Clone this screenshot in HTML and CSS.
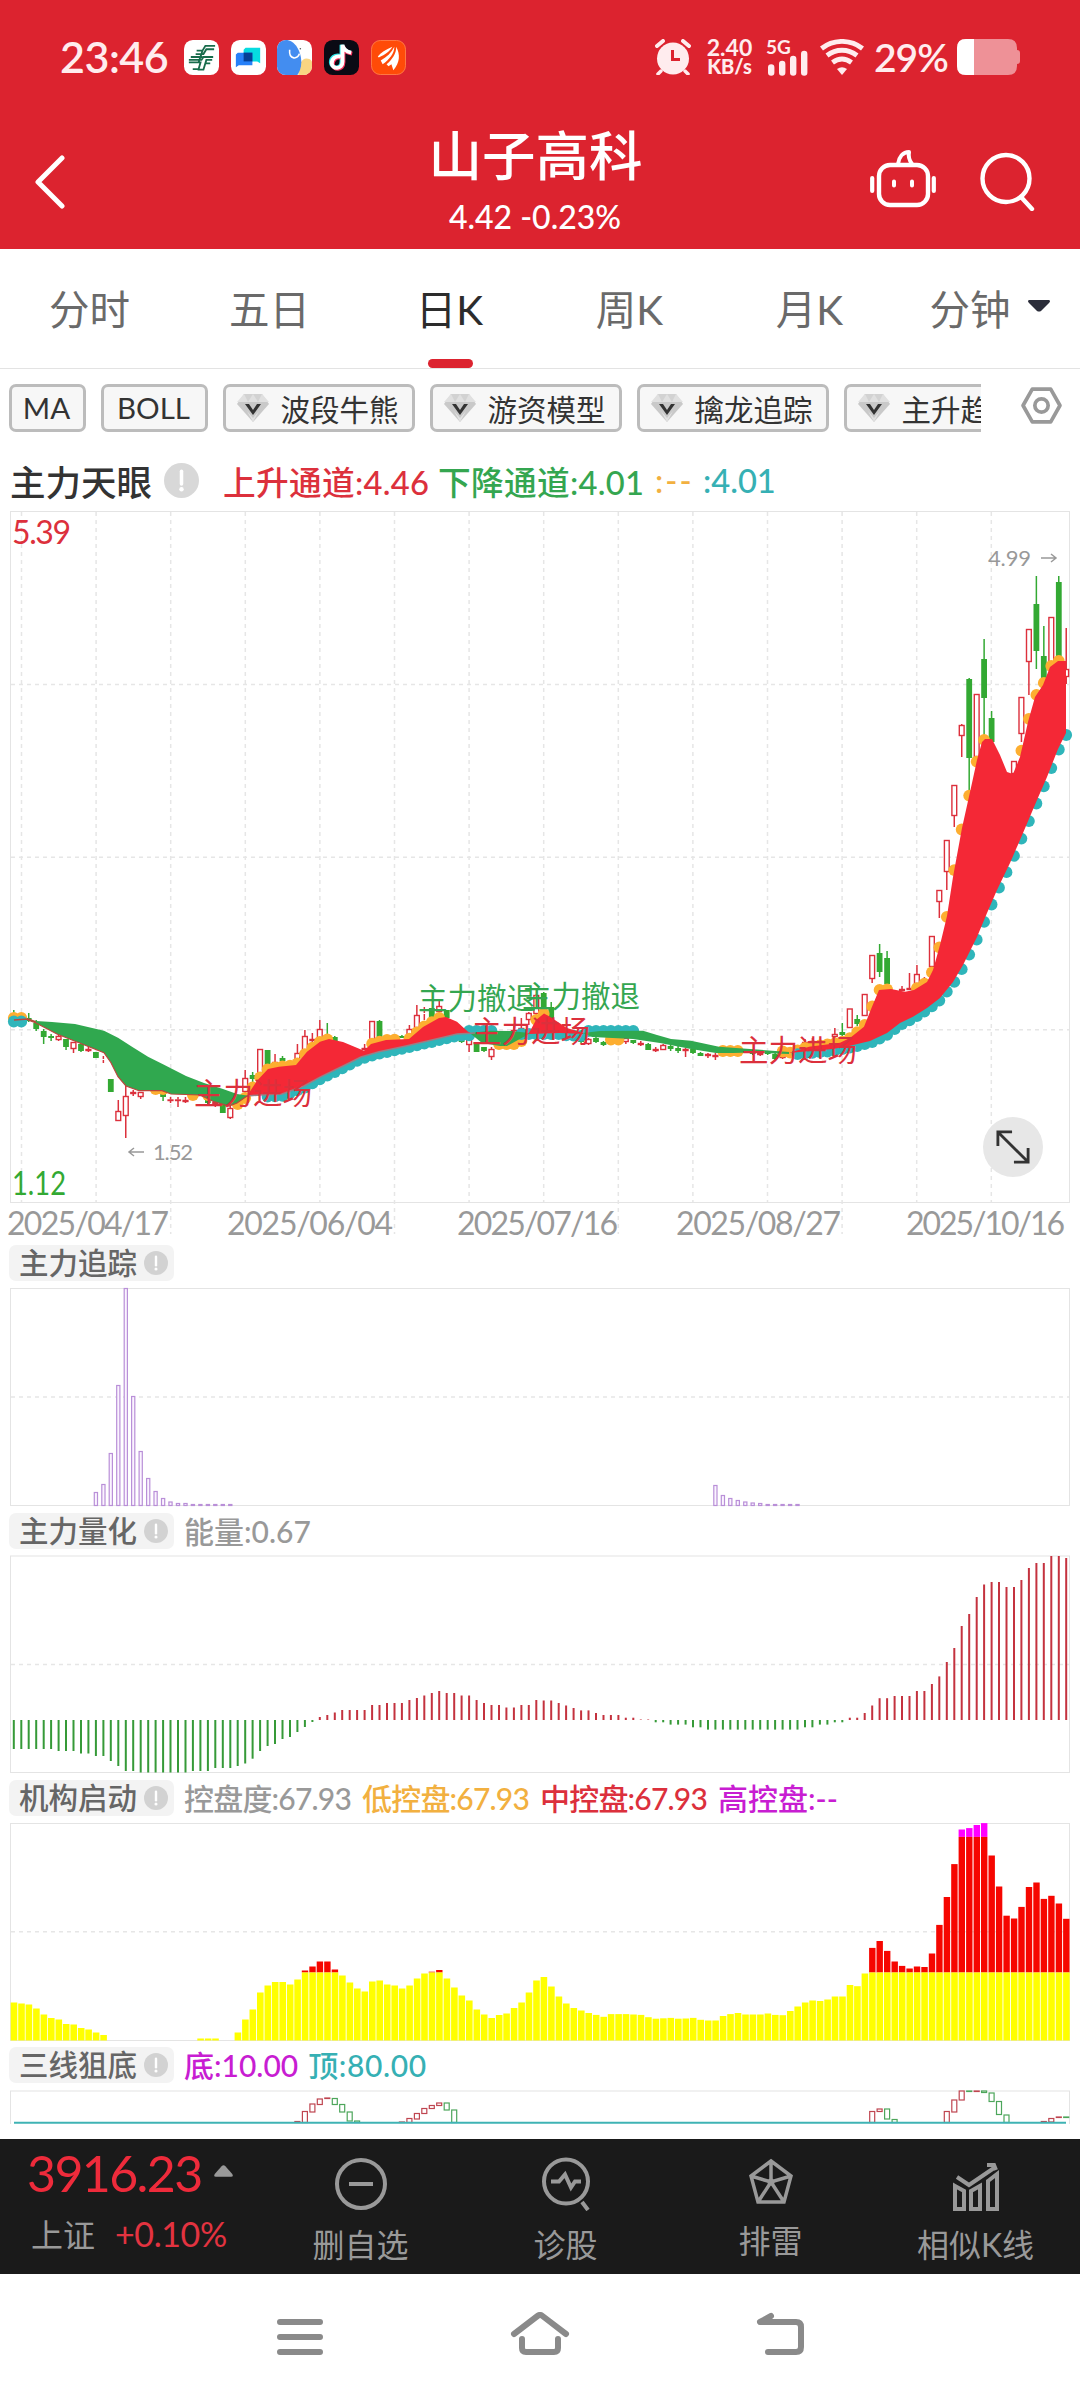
FILE: index.html
```
<!DOCTYPE html>
<html lang="zh-CN">
<head>
    <meta charset="UTF-8">
    <meta name="viewport" content="width=device-width, initial-scale=1.0">
    <title>山子高科 日K</title>
    <link rel="stylesheet" href="styles.css">
</head>
<body>
    <svg class="defs" width="0" height="0">
        <symbol id="gem" viewBox="0 0 32 30">
            <path d="M7 1h18l7 10-16 18L0 11z" fill="#c9c9c9"/>
            <path d="M7 1h18l7 8H0z" fill="#e0e0e0"/>
            <path d="M7 1l4 8 5-8 5 8 4-8" fill="#d2d2d2"/>
            <path d="M10 18l6 7 6-7-6 11z" fill="#e2e2e2"/>
            <path d="M8 11h4l4 6 4-6h4l-8 11z" fill="#333"/>
        </symbol>
        <symbol id="info" viewBox="0 0 36 36">
            <circle cx="18" cy="18" r="18" fill="currentColor"/>
            <path d="M18 8.500v13" stroke="#fff" stroke-width="3.600" stroke-linecap="round"/>
            <circle cx="18" cy="27" r="2.300" fill="#fff"/>
        </symbol>
    </svg>

    <div class="header">
        <div class="status">
            <span class="clock">23:46</span>
            <div class="apps">
                <svg viewBox="0 0 36 36">
                    <rect width="36" height="36" rx="9" fill="#fff"/>
                    <g fill="none" stroke="#176b4b" stroke-width="1.900">
                        <path d="M32 6H22l-3 5h-6M31 9.500h-8l-3 5h-8M30 17.500H20l-2 3H5M7 17.500h12M5 23h12l-2 7H9M29 20.500h-6l-3 10h-6M27 24h-5M19 11l-4 12"/>
                    </g>
                </svg>
                <svg viewBox="0 0 36 36">
                    <rect width="36" height="36" rx="9" fill="#fff"/>
                    <path d="M15 8h15v16l-3-2H13V10z" fill="#06dbe0"/>
                    <path d="M7 13h15v13H8l-3 2V15z" fill="#2680f8"/>
                    <path d="M13 13h9v9h-9z" fill="#053f94"/>
                </svg>
                <svg viewBox="0 0 36 36">
                    <rect width="36" height="36" rx="9" fill="#fff"/>
                    <path d="M22 36c0-12 4-17 8-17 3 0 5 1 6 3v5a9 9 0 0 1-9 9z" fill="#f9d582"/>
                    <path d="M9 0c9 0 16 11 16 23 0 6-2 10-4 13H9a9 9 0 0 1-9-9V9a9 9 0 0 1 9-9z" fill="#438df0"/>
                    <path d="M13 10c-1 11 9 10 10 4" fill="none" stroke="#fff" stroke-width="1.600"/>
                    <circle cx="24" cy="9" r=".8" fill="#555"/>
                </svg>
                <svg viewBox="0 0 36 36">
                    <rect width="36" height="36" rx="9" fill="#0b0a14"/>
                    <g fill="none" stroke-width="4">
                        <path d="M16 16c-5-1-9 2-9 7 0 6 11 8 11-1V5c1 5 4 7 9 8" stroke="#2be4e6"/>
                        <path d="M18 18c-5-1-9 2-9 7 0 6 11 7 11-2V7c1 5 4 6 9 7" stroke="#f8325d"/>
                        <path d="M17 17c-5-1-9 2-9 7 0 6 11 7 11-2V5c1 5 4 7 9 8" stroke="#fff"/>
                    </g>
                </svg>
                <svg viewBox="0 0 36 36">
                    <rect x=".5" y=".5" width="35" height="35" rx="9" fill="#ff4b08" stroke="#ff7a45"/>
                    <path d="M7 17c3-4 8-7 15-10-3 5-7 8-14 11zM10 21C16 18 21 13 24 7c0 7-5 13-12 18zM16 25c6-5 10-11 10-18 4 8 4 16-3 24l-2-6-3 2z" fill="#fff"/>
                </svg>
            </div>
            <div class="signals">
                <svg class="alarm" viewBox="0 0 36 36">
                    <circle cx="18" cy="19.500" r="16" fill="currentColor"/>
                    <path d="M2 7l6-5M34 7l-6-5" stroke="currentColor" stroke-width="4" stroke-linecap="round"/>
                    <path d="M6 32l-3 3M30 32l3 3" stroke="currentColor" stroke-width="3.500" stroke-linecap="round"/>
                    <path d="M17.500 11v9.500H25" fill="none" stroke="#dc232f" stroke-width="3"/>
                </svg>
                <div class="speed"><span>2.40</span><span class="unit">KB/s</span></div>
                <div class="cell">
                    <span>5G</span>
                    <svg viewBox="0 0 40 26"><path d="M3.200 17.500v5M14.200 14v8.500M25.200 9v13.500M36.200 4v18.500" stroke="currentColor" stroke-width="6.400" stroke-linecap="round"/></svg>
                </div>
                <svg class="wifi" viewBox="0 0 44 36">
                    <g fill="none" stroke="currentColor" stroke-width="4.800">
                        <path d="M1.500 9.500c12-9.500 29-9.500 41 0M7 16.500c9-7 21-7 30 0M12.500 23.500c6-4.500 13-4.500 19 0"/>
                    </g>
                    <path d="M17 30q5-3.500 10 0l-5 6z" fill="currentColor"/>
                </svg>
                <span class="percent">29%</span>
                <svg class="battery" viewBox="0 0 64 36">
                    <path d="M9 0h42q9 0 9 9v2q3 0 3 3v8q0 3-3 3v2q0 9-9 9H9q-9 0-9-9V9q0-9 9-9z" fill="#ee9197"/>
                    <path d="M17 0H9Q0 0 0 9v18q0 9 9 9h8z" fill="#fff"/>
                </svg>
            </div>
        </div>
        <div class="title-bar">
            <svg class="back" viewBox="0 0 32 54"><path d="M28 3L4 27l24 24" fill="none" stroke="#fff" stroke-width="5" stroke-linecap="round" stroke-linejoin="round"/></svg>
            <div class="stock">
                <div class="stock-name">山子高科</div>
                <div class="stock-price">4.42 -0.23%</div>
            </div>
            <div class="actions">
                <svg class="robot" viewBox="0 0 66 60" fill="none" stroke="#fff" stroke-width="4.400" stroke-linecap="round">
                    <rect x="9" y="16" width="49" height="40" rx="11"/>
                    <path d="M2.200 29v13M63.800 29v13" stroke-width="4.200"/>
                    <path d="M24 32.500v4M42 32.500v4" stroke-width="4"/>
                    <path d="M28 15c1-7 5-12 11-12-1 5 0 8 3 12" stroke-width="4" stroke-linejoin="round"/>
                </svg>
                <svg class="search" viewBox="0 0 56 60" fill="none" stroke="#fff" stroke-width="4.400" stroke-linecap="round">
                    <circle cx="27" cy="27.500" r="23.500"/>
                    <path d="M42 46l11 12"/>
                </svg>
            </div>
        </div>
    </div>

    <div class="tabs">
        <div class="tab">分时</div>
        <div class="tab">五日</div>
        <div class="tab active">日K</div>
        <div class="tab">周K</div>
        <div class="tab">月K</div>
        <div class="tab">分钟<svg class="caret" viewBox="0 0 22 12"><path d="M1 0h20q2 1 0 3l-8 8q-2 1-4 0L1 3q-2-2 0-3z" fill="#2b2d3a"/></svg></div>
    </div>

    <div class="chips">
        <div class="chip-list">
            <div class="chip">MA</div>
            <div class="chip">BOLL</div>
            <div class="chip"><svg><use href="#gem"/></svg>波段牛熊</div>
            <div class="chip"><svg><use href="#gem"/></svg>游资模型</div>
            <div class="chip"><svg><use href="#gem"/></svg>擒龙追踪</div>
            <div class="chip"><svg><use href="#gem"/></svg>主升趋势</div>
        </div>
        <svg class="setting" viewBox="0 0 40 36" fill="none" stroke="#999" stroke-width="3.600">
            <path d="M11 2h18l9 16-9 16H11L2 18z" stroke-linejoin="round"/>
            <circle cx="20" cy="18" r="6.500"/>
        </svg>
    </div>

    <div class="legend">
        <span class="legend-name">主力天眼</span>
        <svg class="info"><use href="#info"/></svg>
        <span class="red up">上升通道:4.46</span>
        <span class="green down">下降通道:4.01</span>
        <span class="orange dash">:--</span>
        <span class="teal">:4.01</span>
    </div>

    <!-- every chart uses the same canvas units, the viewBox picks its slice -->
    <div class="main-chart">
        <svg id="kline" width="1080" height="735" viewBox="0 505 1080 735"></svg>
        <div class="expand">
            <svg viewBox="0 0 36 36" fill="none" stroke="#333" stroke-width="3"><path d="M2 17V2h15M2 2l32 32M34 19v15H19"/></svg>
        </div>
    </div>

    <div class="sub-head"><span class="tag">主力追踪<svg><use href="#info"/></svg></span></div>
    <svg id="track" width="1080" height="224" viewBox="0 1284 1080 224"></svg>

    <div class="sub-head"><span class="tag">主力量化<svg><use href="#info"/></svg></span><span class="value gray">能量:0.67</span></div>
    <svg id="energy" width="1080" height="223" viewBox="0 1552 1080 223"></svg>

    <div class="sub-head">
        <span class="tag">机构启动<svg><use href="#info"/></svg></span>
        <span class="value tight gray">控盘度:67.93</span>
        <span class="value tight orange">低控盘:67.93</span>
        <span class="value tight red">中控盘:67.93</span>
        <span class="value purple">高控盘:--</span>
    </div>
    <svg id="control" width="1080" height="223" viewBox="0 1819 1080 223"></svg>

    <div class="sub-head">
        <span class="tag">三线狙底<svg><use href="#info"/></svg></span>
        <span class="value purple">底:10.00</span>
        <span class="value wide teal">顶:80.00</span>
    </div>
    <svg id="snipe" width="1080" height="38" viewBox="0 2086 1080 38"></svg>

    <div class="toolbar">
        <div class="index">
            <div class="index-value">3916.23<svg viewBox="0 0 20 12"><path d="M10 0q1 0 2 1l7 8q2 3-1 3H2q-3 0-1-3l7-8q1-1 2-1z" fill="#999"/></svg></div>
            <div class="index-row"><span>上证</span><span class="change">+0.10%</span></div>
        </div>
        <div class="tool">
            <svg viewBox="0 0 54 54"><circle cx="27" cy="27" r="24"/><path d="M15 27h24"/></svg>
            <span>删自选</span>
        </div>
        <div class="tool">
            <svg viewBox="0 0 54 54"><circle cx="27" cy="24.500" r="22"/><path d="M12 24.500h8l6-7 6 13 4-6h6M43 45l6 8"/></svg>
            <span>诊股</span>
        </div>
        <div class="tool radar">
            <svg viewBox="0 0 54 54"><path d="M27 4l20 15-7 26H14L7 19zM27 4v21M7 19l20 6 20-6M14 45l13-20 13 20"/><circle cx="27" cy="25" r="3.500" fill="#999" stroke="none"/></svg>
            <span>排雷</span>
        </div>
        <div class="tool">
            <svg viewBox="0 0 54 54"><path d="M6 29l9 5v18H6zM22 34l9-5v23h-9zM39 24l9-7v35h-9z"/><path d="M8 20l12 8L45 11M38 8h7l2 5"/></svg>
            <span>相似K线</span>
        </div>
    </div>

    <div class="nav">
        <svg viewBox="0 0 60 50"><path d="M10 10h40M10 25h40M10 40h40"/></svg>
        <svg viewBox="0 0 60 50"><path d="M4 22L27.500 4q2.500-2 5 0L56 22M12 27v9q0 4 4 4h28q4 0 4-4v-9"/></svg>
        <svg viewBox="0 0 60 50"><path d="M21 4L10 10h36q5 0 5 5v20q0 5-5 5H18"/></svg>
    </div>

    <script src="chart.js"></script>
</body>
</html>
```
FILE: styles.css
```
* {
    box-sizing: border-box;
}

body {
    margin: 0;
    width: 1080px;
    background-color: #fff;
    color: #333;
    font-family: Lato, "Noto Sans CJK SC", sans-serif;
}

svg {
    display: block;
    flex: none;
}

.defs {
    position: absolute;
}

/* header */
.header {
    height: 249px;
    background-color: #dc232f;
    color: #fff;
    overflow: hidden;
}

.status {
    display: flex;
    align-items: center;
    height: 36px;
    margin-top: 39px;
    padding: 0 59px 0 60px;
    color: #ffecee;
}

.clock {
    width: 124px;
    padding-bottom: 2px;
    font-size: 43px;
    font-weight: 600;
    letter-spacing: -0.5px;
    white-space: nowrap;
}

.apps {
    display: flex;
    gap: 11.7px;
}

.apps svg {
    width: 35px;
    height: 35px;
}

.signals {
    display: flex;
    align-items: center;
    height: 36px;
    margin-left: auto;
    font-weight: bold;
}

.alarm {
    width: 36px;
    height: 36px;
    margin: 0 15px 0 -2px;
}

.speed {
    width: 48px;
    font-size: 23px;
    line-height: 19px;
    text-align: center;
    margin-right: 14px;
}

.speed span {
    display: block;
    margin-left: -1px;
}

.speed .unit {
    font-size: 20px;
    font-weight: 900;
}

.cell {
    width: 40px;
    height: 36px;
    margin-right: 12px;
    font-size: 19px;
    line-height: 15px;
}

.cell span {
    display: block;
    height: 11px;
    margin-left: -2px;
}

.cell svg {
    width: 40px;
    height: 26px;
}

.wifi {
    width: 44px;
    height: 36px;
    margin-right: 10px;
}

.percent {
    width: 83px;
    font-size: 39px;
    font-weight: 600;
    letter-spacing: -1px;
}

.battery {
    width: 64px;
    height: 36px;
}

.title-bar {
    display: grid;
    grid-template-columns: 240px 1fr 240px;
    height: 174px;
}

.back {
    width: 32px;
    height: 54px;
    margin: 80px 0 0 34px;
}

.stock {
    padding-top: 46px;
    text-align: center;
}

.stock-name {
    font-size: 53.5px;
    font-weight: 500;
    line-height: 68px;
    margin-left: -9px;
}

.stock-price {
    font-size: 32px;
    font-weight: 500;
    line-height: 56px;
    margin-left: -10px;
}

.actions {
    display: flex;
    padding: 74px 0 0 30px;
}

.robot {
    width: 66px;
    height: 60px;
    margin-right: 43px;
}

.search {
    width: 56px;
    height: 60px;
    margin-top: 2px;
}

/* period tabs */
.tabs {
    display: flex;
    height: 120px;
    border-bottom: 1px solid #e3e3e3;
}

.tab {
    display: flex;
    align-items: center;
    justify-content: center;
    position: relative;
    width: 180px;
    padding: 0 1px 3px 0;
    font-size: 40.5px;
    font-weight: 400;
    color: #6a6a6a;
}

.tab.active {
    color: #2c2c2c;
}

.tab.active::after {
    content: "";
    position: absolute;
    left: 68px;
    bottom: 0;
    width: 45px;
    height: 9px;
    border-radius: 5px;
    background-color: #dc232f;
}

.caret {
    width: 22px;
    height: 12px;
    margin: 0 0 2px 17px;
}

/* indicator chips */
.chips {
    display: flex;
    height: 78px;
    padding: 15px 18px 0 9px;
    justify-content: space-between;
}

.chip-list {
    display: flex;
    gap: 15px;
    width: 972px;
    height: 48px;
    overflow: hidden;
}

.chip {
    display: flex;
    flex: none;
    align-items: center;
    justify-content: center;
    width: 192px;
    height: 48px;
    padding: 0 2px 1px 0;
    border: 3px solid #bcbcbc;
    border-radius: 7px;
    background-color: #f7f7f7;
    font-size: 29.5px;
    color: #333;
}

.chip:nth-child(1) {
    width: 77px;
}

.chip:nth-child(2) {
    width: 107px;
}

.chip svg {
    width: 32px;
    height: 30px;
    margin-right: 11px;
}

.setting {
    width: 41px;
    height: 37px;
    margin-top: 3px;
}

/* main chart */
.legend {
    display: flex;
    align-items: center;
    height: 58px;
    padding: 9px 0 0 10px;
    font-size: 32.7px;
    font-weight: 500;
    white-space: nowrap;
}

.legend-name {
    width: 154px;
    font-size: 35.5px;
    color: #333;
}

.legend .info {
    width: 35px;
    height: 35px;
    margin-right: 24px;
    color: #d8d8d8;
}

.legend .up {
    width: 215px;
    letter-spacing: 0.3px;
}

.legend .down {
    width: 217px;
    letter-spacing: 0.3px;
}

.legend .dash {
    width: 48px;
    letter-spacing: 2px;
}

.red {
    color: #dc303c;
}

.green {
    color: #34a650;
}

.orange {
    color: #f2b040;
}

.teal {
    color: #36b0b4;
}

.purple {
    color: #c81dd2;
}

.gray {
    color: #999;
}

.main-chart {
    position: relative;
    height: 735px;
}

.expand {
    position: absolute;
    left: 983px;
    top: 612px;
    display: flex;
    align-items: center;
    justify-content: center;
    width: 60px;
    height: 60px;
    border-radius: 50%;
    background-color: #e7e7e7;
}

.expand svg {
    width: 34px;
    height: 34px;
}

/* sub charts */
.sub-head {
    display: flex;
    align-items: center;
    gap: 10px;
    height: 44px;
    padding: 2px 0 0 9px;
    font-size: 30px;
    font-weight: 500;
    white-space: nowrap;
}

.tag {
    display: flex;
    align-items: center;
    justify-content: space-between;
    width: 165px;
    height: 36px;
    padding: 0 6px 0 10px;
    border-radius: 7px;
    background-color: #f3f3f3;
    color: #666;
    font-size: 29.5px;
    line-height: 36px;
}

.tag svg {
    width: 24px;
    height: 24px;
    color: #d2d2d2;
}

.value {
    padding-bottom: 3px;
}

.value.tight {
    width: 168px;
    letter-spacing: -0.8px;
}

.value.wide {
    letter-spacing: 0.6px;
}

/* bottom */
.toolbar {
    display: flex;
    height: 135px;
    margin-top: 15px;
    background-color: #1a1a1a;
    color: #999;
}

.index {
    width: 258px;
    padding: 4px 0 0 27px;
}

.index-value {
    display: flex;
    align-items: center;
    height: 60px;
    font-size: 50px;
    line-height: 60px;
    letter-spacing: -1.6px;
    color: #ee2b3b;
}

.index-value svg {
    width: 19px;
    height: 12px;
    margin: 0 0 4px 12px;
}

.index-row {
    display: flex;
    align-items: center;
    height: 60px;
    padding-left: 4px;
    font-size: 32px;
}

.index-row .change {
    margin-left: 20px;
    font-size: 34px;
    letter-spacing: -0.4px;
    color: #e33340;
}

.tool {
    display: flex;
    flex-direction: column;
    align-items: center;
    width: 205px;
    padding-top: 18px;
    font-size: 32px;
    line-height: 46px;
}

.tool svg {
    width: 54px;
    height: 54px;
    margin-bottom: 11px;
    fill: none;
    stroke: #999;
    stroke-width: 4;
}

.tool.radar svg {
    margin-bottom: 7px;
    stroke-width: 3.500;
}

.nav {
    display: flex;
    justify-content: center;
    gap: 180px;
    height: 126px;
    padding-top: 38px;
}

.nav svg {
    width: 60px;
    height: 50px;
    fill: none;
    stroke: #8a8a8a;
    stroke-width: 6;
    stroke-linecap: round;
    stroke-linejoin: round;
}

/* svg text */
.price {
    font-size: 32px;
}

.date {
    font-size: 32px;
    fill: #999;
}

.mark {
    font-size: 22px;
    fill: #999;
}

.note {
    font-size: 29.5px;
    font-family: "Noto Sans CJK SC", sans-serif;
}
```
FILE: chart.js
```
const RED = '#dc303c';
const GREEN = '#33a933';
const STEP = 7.464;
const X0 = 13.8;
const px = i => X0 + i * STEP;

function rect(x, y, w, h, attrs) {
    return `<rect x="${x.toFixed(1)}" y="${y.toFixed(1)}" width="${w}" height="${Math.max(h, 0).toFixed(1)}" ${attrs}/>`;
}

function line(x1, y1, x2, y2, attrs) {
    return `<line x1="${x1}" y1="${y1}" x2="${x2}" y2="${y2}" ${attrs}/>`;
}

const grid = 'stroke="#e6e6e6" stroke-width="1.500" stroke-dasharray="4 4"';

function frame(top, bottom) {
    return `<rect x="10.500" y="${top}" width="1059" height="${bottom - top}" fill="none" stroke="#e4e4e4"/>`;
}

function draw(id, html) {
    document.getElementById(id).innerHTML = html;
}

// ---- K line ----
// upper and lower edge of each band
const bands = [
    { color: '#30a84f',
      up: [[28, 1020], [36, 1021], [52, 1022], [75, 1024], [104, 1030.700], [118, 1037.700], [132, 1046.700], [148, 1056.700], [164, 1064.700], [186, 1076], [204, 1083], [223, 1089], [237, 1094], [247, 1095.500]],
      low: [[28, 1020], [36, 1023], [57, 1034], [104, 1052.700], [111, 1062.700], [118, 1076.700], [126, 1086], [139, 1090.700], [162, 1090.700], [171, 1094], [200, 1095], [214, 1101.700], [229, 1106], [237, 1103], [247, 1096]] },
    { color: '#f42836',
      up: [[247, 1096], [257, 1080.700], [268, 1069], [279, 1066.700], [296, 1065], [307, 1051.700], [320, 1041.700], [329, 1039], [343, 1042], [364, 1050.700], [371, 1044], [386, 1040], [409, 1039], [423, 1027], [439, 1018], [446, 1017], [457, 1021.700], [468, 1031.700], [475, 1035]],
      low: [[247, 1096], [261, 1095], [282, 1094], [304, 1086], [321, 1076.700], [343, 1066], [361, 1057], [379, 1051.700], [407, 1045.700], [436, 1039], [457, 1034], [475, 1033]] },
    { color: '#30a84f',
      up: [[471, 1033], [489, 1030.700], [511, 1031], [529, 1033]],
      low: [[471, 1034], [482, 1043], [500, 1046], [507, 1046], [518, 1040], [529, 1034]] },
    { color: '#f42836',
      up: [[529, 1033], [536, 1020], [544, 1013.500], [550, 1016.700], [567, 1028], [583, 1033]],
      low: [[529, 1034], [560, 1033], [583, 1034]] },
    { color: '#30a84f',
      up: [[583, 1033], [600, 1031], [643, 1030.700], [657, 1035], [671, 1039], [691, 1040.700], [719, 1046.700], [736, 1048], [789, 1052]],
      low: [[583, 1033], [592, 1037], [633, 1039], [660, 1043], [691, 1049], [716, 1053], [733, 1053], [750, 1052.500], [789, 1054]] },
    { color: '#f42836',
      up: [[789, 1053], [809, 1046.700], [840, 1042.700], [850, 1038], [864, 1026.700], [872, 1006.700], [879, 990], [891, 989], [905, 991.700], [914, 990], [927, 982], [933, 970], [940, 945], [947, 916], [953, 877], [962, 828], [972, 783], [977, 760], [982, 742], [985, 739], [992, 739], [1000, 755], [1007, 772], [1013, 774], [1020, 757], [1028, 722], [1035, 697], [1043, 685], [1050, 667], [1058, 661], [1066, 661]],
      low: [[789, 1053], [802, 1051.700], [833, 1049], [850, 1045.700], [870, 1041], [887, 1033], [900, 1023], [913, 1016.700], [927, 1008], [940, 998], [953, 982], [963, 965], [977, 937], [987, 913], [997, 890], [1010, 863], [1023, 833], [1037, 800], [1047, 777], [1058, 749], [1066, 733]] }
];

function edge(points, x) {
    for (let k = 1; k < points.length; k++) {
        const [x1, y1] = points[k - 1];
        const [x2, y2] = points[k];
        if (x <= x2) return y1 + (y2 - y1) * (x - x1) / (x2 - x1);
    }
    return points[points.length - 1][1];
}

// [bar, body top, body bottom, high, low, color]
const candles = [
    [0, 1017, 1022, 1010, 1022, 'g'], [2, 1018, 1021, 1013, 1022, 'g'], [3, 1023, 1029, 1020, 1031, 'g'], [4, 1031, 1037, 1029, 1044, 'g'],
    [5, 1036, 1038, 1034, 1041, 'g'], [6, 1036, 1040, 1033, 1041, 'r'], [7, 1039, 1047, 1039, 1050, 'g'], [8, 1042, 1049, 1042, 1053, 'r'],
    [9, 1044, 1051, 1044, 1052, 'g'], [10, 1049, 1051, 1046, 1052, 'r'], [11, 1052, 1058, 1052, 1058, 'g'], [12, 1059, 1060, 1056, 1063, 'r'],
    [13, 1079, 1092, 1079, 1092, 'g'], [14, 1111, 1121, 1100, 1121, 'r'], [15, 1096, 1116, 1086, 1138, 'r'], [16, 1092, 1094, 1090, 1096, 'r'],
    [17, 1092, 1097, 1092, 1099, 'r'], [20, 1091, 1097, 1091, 1101, 'g'], [21, 1099.500, 1101, 1097, 1103, 'r'], [22, 1099.500, 1101, 1097, 1107, 'r'],
    [23, 1100, 1102, 1097, 1103, 'r'], [26, 1097, 1103, 1095, 1104, 'g'], [27, 1102, 1104, 1098, 1107, 'r'], [28, 1103, 1113, 1103, 1113, 'g'],
    [29, 1108, 1118, 1105, 1119, 'r'], [31, 1078, 1092, 1070, 1094, 'r'], [32, 1075, 1079, 1072, 1085, 'g'], [33, 1049, 1077, 1049, 1077, 'r'],
    [34, 1050, 1070, 1050, 1070, 'g'], [35, 1062, 1067, 1054, 1067, 'r'], [36, 1058, 1061, 1056, 1064, 'g'], [38, 1053, 1063, 1044, 1063, 'r'],
    [39, 1036, 1053, 1030, 1055, 'r'], [40, 1039, 1041, 1033, 1043, 'r'], [41, 1029, 1040, 1020, 1042, 'r'], [42, 1037, 1040, 1023, 1040, 'g'],
    [43, 1037, 1041, 1036, 1042, 'g'], [47, 1048, 1050, 1044, 1050, 'r'], [48, 1021, 1043, 1021, 1043, 'r'], [49, 1021, 1037, 1020, 1038, 'g'],
    [52, 1036, 1038, 1035, 1038, 'g'], [53, 1029, 1037, 1025, 1037, 'r'], [54, 1015, 1028, 1005, 1030, 'r'], [55, 1013, 1014, 1007, 1020, 'r'],
    [56, 1008, 1018, 1008, 1020, 'g'], [57, 1006, 1012, 1001, 1014, 'r'], [58, 1010, 1018, 1010, 1018, 'g'], [60, 1038, 1042, 1036, 1043, 'g'],
    [61, 1038, 1045, 1036, 1052, 'r'], [62, 1042, 1052, 1042, 1052, 'g'], [63, 1047, 1051, 1047, 1052, 'g'], [64, 1049, 1057, 1047, 1060, 'r'],
    [67, 1030, 1036, 1026, 1038, 'r'], [68, 1028, 1034, 1018, 1036, 'r'], [69, 1013, 1020, 1012, 1025, 'r'], [70, 995, 1014, 994, 1015, 'r'],
    [71, 993, 1010, 992, 1012, 'g'], [72, 1007, 1020, 1002, 1020, 'g'], [73, 1034, 1037, 1031, 1039, 'g'], [75, 1035, 1039, 1033, 1041, 'g'],
    [76, 1037, 1042, 1035, 1043, 'g'], [77, 1039, 1044, 1038, 1045, 'r'], [78, 1038, 1042, 1037, 1043, 'g'], [79, 1042, 1045, 1041, 1046, 'g'],
    [82, 1038, 1042, 1037, 1044, 'r'], [83, 1040, 1043, 1040, 1044, 'g'], [84, 1043, 1045, 1041, 1046, 'r'], [85, 1044, 1050, 1043, 1050, 'g'],
    [86, 1049, 1051, 1047, 1052, 'r'], [87, 1045, 1050, 1044, 1050, 'r'], [88, 1046, 1049, 1045, 1051, 'g'], [89, 1048, 1051, 1046, 1053, 'g'],
    [90, 1049, 1051, 1048, 1057, 'r'], [91, 1049, 1053, 1049, 1054, 'g'], [92, 1053, 1056, 1052, 1056, 'g'], [93, 1054, 1056, 1053, 1058, 'r'],
    [94, 1055, 1057, 1053, 1060, 'r'], [99, 1052, 1054, 1051, 1055, 'g'], [100, 1053, 1055, 1052, 1056, 'r'], [101, 1052, 1054, 1051, 1055, 'g'],
    [102, 1054, 1059, 1053, 1060, 'g'], [103, 1055, 1058, 1052, 1059, 'r'], [106, 1042, 1046, 1039, 1046, 'r'], [107, 1041, 1044, 1038, 1044, 'r'],
    [110, 1034, 1037, 1028, 1038, 'r'], [111, 1032, 1035, 1023, 1036, 'g'], [112, 1008.500, 1028, 1008.500, 1028, 'r'], [113, 1019, 1024, 1015, 1026, 'g'],
    [114, 994, 1016, 994, 1016, 'r'], [115, 955, 979, 955, 983, 'r'], [116, 953, 972, 944, 977, 'g'], [117, 958, 984, 951, 985, 'g'],
    [119, 989, 991, 986, 991, 'r'], [120, 988, 990, 973, 990, 'r'], [121, 974, 984, 965, 985, 'r'], [122, 976, 977, 976, 978, 'r'],
    [123, 936, 967, 936, 967, 'r'], [124, 890, 902, 890, 918, 'r'], [125, 840, 872, 840, 890, 'r'], [126, 785, 816, 785, 827, 'r'],
    [127, 725, 736, 724, 757, 'r'], [128, 679, 758, 678, 792, 'g'], [129, 694, 757, 694, 758, 'r'], [130, 659, 698, 639, 735, 'g'],
    [131, 718, 742, 711, 742, 'g'], [134, 761, 774, 761, 774, 'r'], [135, 697, 734, 697, 742, 'r'], [136, 629, 662, 629, 695, 'r'],
    [137, 604, 651, 576, 669, 'g'], [138, 656, 679, 626, 680, 'g'], [139, 617, 664, 617, 664, 'r'], [140, 582, 657, 576, 660, 'g'],
    [141, 669, 677, 628, 684, 'r']
];

function candle([i, top, bottom, high, low, c]) {
    const x = px(i);
    const color = c === 'g' ? GREEN : RED;
    let s = '';
    if (high < top) s += line(x, high, x, top, `stroke="${color}" stroke-width="1.500"`);
    if (low > bottom) s += line(x, bottom, x, low, `stroke="${color}" stroke-width="1.500"`);
    if (c === 'g') {
        s += rect(x - 2.900, top, 5.800, bottom - top, `fill="${color}"`);
    } else {
        s += rect(x - 2.400, top + 0.500, 4.800, bottom - top - 1, `fill="#fff" stroke="${color}" stroke-width="1.400"`);
    }
    return s;
}

function dots(from, to, side, color, fixed) {
    let s = '';
    for (let i = from; i <= to; i++) {
        const band = bands.find(b => px(i) <= b.up[b.up.length - 1][0] + 1) || bands[bands.length - 1];
        const y = fixed || edge(band[side], px(i)) + (side === 'low' ? 2 : 0);
        s += `<circle cx="${px(i).toFixed(1)}" cy="${y.toFixed(1)}" r="5.900" fill="${color}"/>`;
    }
    return s;
}

function kline() {
    let s = frame(511.500, 1202.500);
    for (let k = 0; k < 14; k++) {
        const x = 21.500 + k * 74.600;
        s += line(x, 512, x, k % 3 === 2 ? 1234 : 1202, grid);
    }
    for (let k = 1; k < 4; k++) s += line(11, 512 + k * 172.600, 1069, 512 + k * 172.600, grid);
    s += candles.map(candle).join('');

    const O = '#fdae30';
    const T = '#2fb5ba';
    s += dots(19, 20, 'low', O, 1089) + dots(24, 24, 'low', O, 1095) + dots(26, 26, 'low', O, 1095);
    s += dots(30, 30, 'low', O, 1104) + dots(31, 31, 'low', O, 1098) + dots(32, 42, 'up', O);
    s += dots(48, 51, 'up', O) + dots(53, 57, 'up', O);
    s += dots(65, 67, 'low', O, 1044) + dots(68, 68, 'low', O, 1041) + dots(70, 71, 'up', O);
    s += dots(80, 81, 'low', O, 1039.500) + dots(95, 97, 'low', O, 1051);
    s += dots(103, 117, 'up', O) + dots(121, 130, 'up', O) + dots(135, 140, 'up', O);
    s += dots(34, 61, 'low', T) + dots(61, 64, 'up', T, 1031) + dots(68, 73, 'up', T, 1034) + dots(74, 76, 'low', T);
    s += dots(77, 83, 'up', T, 1031) + dots(105, 141, 'low', T);

    for (const b of bands) {
        const pts = b.up.concat(b.low.slice().reverse()).map(p => p.join(',')).join(' ');
        s += `<polygon points="${pts}" fill="${b.color}"/>`;
    }
    // first two bars and the thin outlines stay on top
    s += dots(0, 1, 'up', O, 1018) + dots(0, 1, 'low', T, 1021.500);
    s += '<polyline points="14,1020 28,1019 36,1022" fill="none" stroke="#b8473c" stroke-width="1.500"/>';
    s += `<polyline points="${bands[0].low.map(p => p.join(',')).join(' ')}" fill="none" stroke="#b8473c" stroke-width="1.200"/>`;
    s += `<polyline points="${bands[1].low.map(p => p.join(',')).join(' ')}" fill="none" stroke="#9a7f86" stroke-width="1.500"/>`;

    s += `<text class="price" x="12" y="544" fill="${RED}" textLength="59">5.39</text>`;
    s += `<text class="price" x="12" y="1195" fill="${GREEN}" textLength="54" lengthAdjust="spacingAndGlyphs">1.12</text>`;
    s += `<text class="mark" x="988" y="566" textLength="43">4.99</text>`;
    s += `<text class="mark" x="153" y="1160" textLength="40">1.52</text>`;
    s += '<path d="M1041 558h15m-5-4l5 4-5 4M144 1152h-15m5-4l-5 4 5 4" fill="none" stroke="#999" stroke-width="1.500"/>';

    const notes = [[418, 1009, '主力撤退', '#34a650'], [522, 1007, '主力撤退', '#34a650'], [194, 1104, '主力进场', RED], [472, 1042, '主力进场', RED], [739, 1061, '主力进场', RED]];
    for (const [x, y, t, c] of notes) s += `<text class="note" x="${x}" y="${y}" fill="${c}">${t}</text>`;

    // x and width of every date label
    const dates = [[7, 162, '2025/04/17'], [227, 166, '2025/06/04'], [457, 161, '2025/07/16'], [676, 165, '2025/08/27'], [906, 159, '2025/10/16']];
    for (const [x, w, t] of dates) s += `<text class="date" x="${x}" y="1235" textLength="${w}">${t}</text>`;
    draw('kline', s);
}

// ---- 主力追踪 ----
function track() {
    let s = frame(1288.500, 1505.500) + line(11, 1397, 1069, 1397, grid);
    const sets = [
        [11, [13, 21, 52, 120, 217, 109, 54, 27, 14, 7, 3.500, 2, 2, 1, 1, 1, 1, 1, 1]],
        [94, [20, 10, 7, 5, 3.500, 2.500, 2, 1, 1, 1, 1, 1]]
    ];
    for (const [start, values] of sets) {
        values.forEach((v, k) => {
            s += rect(px(start + k) - 1.600, 1505.500 - v, 3.200, v, 'fill="#fbf4ff" stroke="#b98fd8" stroke-width="1.200"');
        });
    }
    draw('track', s);
}

// ---- 主力量化 ----
const energyValues = [
    -29, -29, -29, -29, -29, -29, -31, -31, -31, -33.500, -33.500, -36, -36, -41, -46, -51, -51, -52.500, -52.500, -52.500,
    -52.500, -52.500, -52.500, -52.500, -51, -51, -51, -48, -48, -48, -46, -43.500, -38.700, -31, -26, -24, -19, -17, -12, -7,
    -2, 3, 5, 7.500, 10, 10, 10, 10, 15, 15, 17, 17, 17, 20, 22, 24.500, 27, 29, 27, 27,
    24.500, 24.500, 20, 17, 15, 15, 12.500, 12.500, 15, 15, 20, 19.500, 19.500, 17, 14.500, 12, 9.600, 9.600, 7, 5,
    5, 5, 2.300, 2.300, 0.500, 0.500, -2.300, -2.300, -4.600, -4.600, -4.600, -7.300, -7.300, -9.600, -9.600, -9.600, -9.600, -9.600, -9.600, -9.600,
    -9.600, -9.600, -9.600, -9.600, -9.600, -9.600, -7.300, -7.300, -4.600, -4.600, -2.300, -2.300, 2.300, 2.300, 7, 14.500, 21.800, 21.800, 24, 24,
    24, 29, 29, 36, 43.600, 58, 72, 94, 106, 123, 135.500, 138, 138, 133, 133, 140, 152, 157, 157, 164,
    164, 162
];

function energy() {
    let s = frame(1556, 1772.500) + line(11, 1664.500, 1069, 1664.500, grid);
    energyValues.forEach((v, i) => {
        const color = v > 0 ? '#c4323f' : '#369a38';
        s += rect(px(i) - 1, v > 0 ? 1720 - v : 1720, 2, Math.abs(v), `fill="${color}"`);
    });
    draw('energy', s);
}

// ---- 机构启动 ----
const controlValues = [
    38, 37, 36, 32, 26, 22.500, 21, 16.500, 16, 12.500, 11, 8, 5.500, 0, 0, 0, 0, 0, 0, 0,
    0, 0, 0, 0, 0, 2, 2, 2, 0, 0, 8, 21, 31, 48, 55, 58.500, 58.500, 56, 61, 70,
    74, 79, 79, 71, 65, 58, 52, 49, 59, 60, 56, 55, 52, 55, 62, 67, 68.800, 70.500, 62, 53,
    45, 40, 31, 26, 22.500, 25.500, 27, 32.500, 38, 48, 60, 63.500, 54, 44, 37, 32.500, 30, 27.500, 25.600, 23.700,
    26.400, 26.400, 26.400, 26, 25.600, 23.300, 21.800, 22.200, 22.600, 21.800, 22, 22.600, 20.700, 20, 20, 24.500, 26.400, 27.500, 26, 26,
    26, 27, 25.600, 25.300, 29.500, 34, 38, 40, 39.500, 41, 44, 44, 55.500, 54.300, 67, 92.600, 99.500, 89.600, 79, 74.600,
    72, 74, 73.500, 87, 115.600, 143.500, 176.400, 211, 212.400, 215.500, 217.400, 185, 154, 124.800, 122, 133.600, 153.500, 158, 141.600, 144.700,
    137, 121.700
];

function control() {
    const base = 2040.500;
    let s = frame(1823.500, base) + line(11, 1931.700, 1069, 1931.700, grid);
    controlValues.forEach((v, i) => {
        const x = px(i) - 3.100;
        if (v > 203.600) s += rect(x, base - v, 6.400, v - 203.600, 'fill="#f0f"');
        if (v > 68) s += rect(x, base - Math.min(v, 203.600), 6.400, Math.min(v, 203.600) - 68, 'fill="#f60600"');
        s += rect(x, base - Math.min(v, 68), 6.600, Math.min(v, 68), 'fill="#ff0"');
    });
    draw('control', s);
}

// ---- 三线狙底 ----
const snipeBars = [
    [38, 2121.500, 2122.500, 'r'], [39, 2111.500, 2122.500, 'r'], [40, 2104, 2112, 'r'], [41, 2099, 2104.500, 'r'], [42, 2098, 2098.500, 'r'],
    [43, 2098.500, 2104.500, 'g'], [44, 2104.500, 2112, 'g'], [45, 2112, 2121, 'g'], [46, 2121, 2122.500, 'g'],
    [52, 2122, 2122.500, 'r'], [53, 2118.500, 2122.500, 'r'], [54, 2113.500, 2119, 'r'], [55, 2108.500, 2113.500, 'r'], [56, 2105.500, 2108.500, 'r'], [57, 2103, 2105.500, 'r'],
    [58, 2103, 2110, 'g'], [59, 2110, 2122.500, 'g'],
    [115, 2111.500, 2122.500, 'r'], [116, 2109, 2111.500, 'r'], [117, 2109, 2119, 'g'], [118, 2119.500, 2122.500, 'g'],
    [125, 2111.500, 2122.500, 'r'], [126, 2100, 2112, 'r'], [127, 2091, 2100, 'r'], [128, 2091, 2091.500, 'g'], [129, 2091, 2091.500, 'r'],
    [130, 2091, 2092.500, 'g'], [131, 2093, 2101.500, 'g'], [132, 2101.500, 2114.500, 'g'], [133, 2115, 2122.500, 'g'],
    [138, 2121.500, 2122, 'r'], [139, 2118.500, 2122, 'r'], [140, 2117, 2117.500, 'r'], [141, 2117, 2117.500, 'g']
];

function snipe() {
    let s = frame(2091, 2140);
    for (const [i, top, bottom, c] of snipeBars) {
        s += rect(px(i) - 2.500, top, 5, bottom - top, `fill="#fff" stroke="${c === 'g' ? '#4da65b' : '#bf4550'}" stroke-width="1.200"`);
    }
    s += line(14, 2122.800, 1066, 2122.800, 'stroke="#3fb3b4" stroke-width="2"');
    draw('snipe', s);
}

kline();
track();
energy();
control();
snipe();
```
